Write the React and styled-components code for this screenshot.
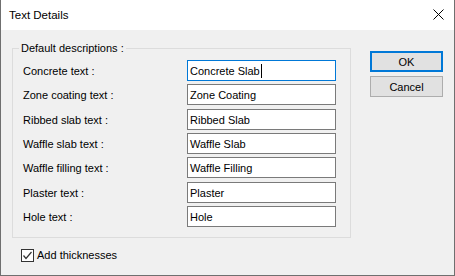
import React from "react";
import styled, { createGlobalStyle } from "styled-components";

const Global = createGlobalStyle`
  html, body { margin: 0; padding: 0; background: #ffffff; }
  body { font-family: "Liberation Sans", Arial, sans-serif; font-size: 11px; color: #000; }
`;

const Window = styled.div`
  width: 455px;
  height: 276px;
  box-sizing: border-box;
  border: 1px solid #6f6f6f;
  border-top: none;
  background: #f0f0f0;
  display: flex;
  flex-direction: column;
`;

const TitleBar = styled.div`
  height: 30px;
  flex: none;
  background: #ffffff;
  display: flex;
  align-items: center;
  justify-content: space-between;
  padding: 0 10px 0 8px;
`;

const Title = styled.span`
  font-size: 11.5px;
  color: #000;
`;

const Close = styled.svg`
  width: 11px;
  height: 11px;
  margin-top: -1px;
`;

const Body = styled.div`
  flex: 1;
  display: flex;
  padding: 12px 10px 0 11px;
  gap: 19px;
`;

const LeftCol = styled.div`
  display: flex;
  flex-direction: column;
`;

const Group = styled.fieldset`
  margin: 0;
  width: 339px;
  box-sizing: border-box;
  border: 1px solid #dcdcdc;
  padding: 5px 13px 10px 10px;
`;

const Legend = styled.legend`
  padding: 0 2px;
  margin-left: -4px;
  line-height: 13px;
`;

const Grid = styled.div`
  display: grid;
  grid-template-columns: 164px 149px;
  row-gap: 3.33px;
`;

const Label = styled.label`
  display: flex;
  align-items: center;
  height: 21px;
  padding-top: 1px;
  box-sizing: border-box;
`;

const Field = styled.div`
  height: 21px;
  box-sizing: border-box;
  background: #fff;
  border: 1px solid ${(p) => (p.$focused ? "#0078d7" : "#7a7a7a")};
  display: flex;
  align-items: center;
  padding: 1px 0 0 2px;
  white-space: nowrap;
`;

const Caret = styled.span`
  display: inline-block;
  width: 1px;
  height: 14px;
  background: #000;
  margin-left: 1px;
`;

const CheckRow = styled.label`
  display: flex;
  align-items: center;
  gap: 3px;
  margin-top: 11px;
  margin-left: 9px;
`;

const Box = styled.span`
  width: 13px;
  height: 13px;
  box-sizing: border-box;
  border: 1px solid #333;
  background: #fff;
  display: flex;
  align-items: center;
  justify-content: center;
`;

const RightCol = styled.div`
  display: flex;
  flex-direction: column;
  gap: 4px;
  padding-top: 9px;
`;

const Button = styled.button`
  width: 73px;
  height: 21px;
  box-sizing: border-box;
  margin: 0;
  padding: 0;
  font-family: "Liberation Sans", Arial, sans-serif;
  font-size: 11px;
  color: #000;
  background: #e1e1e1;
  border: ${(p) => (p.$default ? "2px solid #0078d7" : "1px solid #adadad")};
`;

const rows = [
  ["Concrete text :", "Concrete Slab"],
  ["Zone coating text :", "Zone Coating"],
  ["Ribbed slab text :", "Ribbed Slab"],
  ["Waffle slab text :", "Waffle Slab"],
  ["Waffle filling text :", "Waffle Filling"],
  ["Plaster text :", "Plaster"],
  ["Hole text :", "Hole"],
];

export default function App() {
  return (
    <>
      <Global />
      <Window>
        <TitleBar>
          <Title>Text Details</Title>
          <Close viewBox="0 0 11 11">
            <path d="M0.5 0.5 L10.5 10.5 M10.5 0.5 L0.5 10.5" stroke="#000" strokeWidth="1" fill="none" />
          </Close>
        </TitleBar>
        <Body>
          <LeftCol>
            <Group>
              <Legend>Default descriptions :</Legend>
              <Grid>
                {rows.map(([l, v], i) => (
                  <React.Fragment key={l}>
                    <Label>{l}</Label>
                    <Field $focused={i === 0}>
                      {v}
                      {i === 0 && <Caret />}
                    </Field>
                  </React.Fragment>
                ))}
              </Grid>
            </Group>
            <CheckRow>
              <Box>
                <svg width="11" height="11" viewBox="0 0 11 11">
                  <path d="M1.5 5.5 L4 8.5 L9.5 2" stroke="#333" strokeWidth="1.2" fill="none" />
                </svg>
              </Box>
              Add thicknesses
            </CheckRow>
          </LeftCol>
          <RightCol>
            <Button $default>OK</Button>
            <Button>Cancel</Button>
          </RightCol>
        </Body>
      </Window>
    </>
  );
}
